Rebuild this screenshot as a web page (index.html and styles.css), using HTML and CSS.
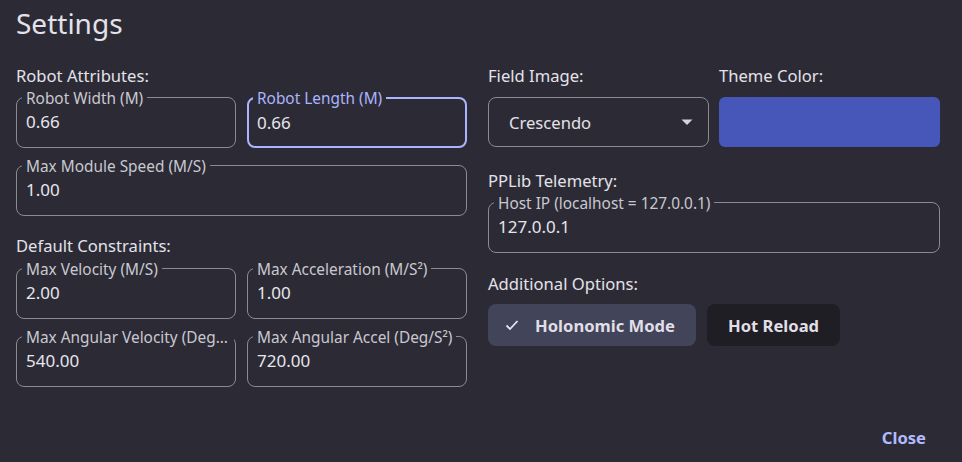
FILE: index.html
```html
<!DOCTYPE html>
<html>
<head>
<meta charset="utf-8">
<link rel="stylesheet" href="styles.css">
</head>
<body>
<div class="dialog">
  <h1 class="title">Settings</h1>
  <div class="columns">
    <div class="col">
      <div class="section-label">Robot Attributes:</div>
      <div class="row2">
        <div class="field"><span class="flabel">Robot Width (M)</span><span class="value">0.66</span></div>
        <div class="field focused"><span class="flabel">Robot Length (M)</span><span class="value">0.66</span></div>
      </div>
      <div class="field mt"><span class="flabel">Max Module Speed (M/S)</span><span class="value">1.00</span></div>
      <div class="section-label sec2">Default Constraints:</div>
      <div class="row2">
        <div class="field"><span class="flabel">Max Velocity (M/S)</span><span class="value">2.00</span></div>
        <div class="field"><span class="flabel">Max Acceleration (M/S²)</span><span class="value">1.00</span></div>
      </div>
      <div class="row2 mt">
        <div class="field"><span class="flabel trunc">Max Angular Velocity (Deg/S)</span><span class="value">540.00</span></div>
        <div class="field"><span class="flabel">Max Angular Accel (Deg/S²)</span><span class="value">720.00</span></div>
      </div>
    </div>
    <div class="col">
      <div class="row2 heads">
        <div class="section-label">Field Image:</div>
        <div class="section-label">Theme Color:</div>
      </div>
      <div class="row2">
        <div class="select"><span>Crescendo</span><svg class="arrow" width="14" height="8" viewBox="0 0 14 8"><path d="M1.5 1.5h11L7 7z" fill="#d4d4da"/></svg></div>
        <div class="swatch"></div>
      </div>
      <div class="section-label sec3">PPLib Telemetry:</div>
      <div class="field"><span class="flabel">Host IP (localhost = 127.0.0.1)</span><span class="value">127.0.0.1</span></div>
      <div class="section-label sec4">Additional Options:</div>
      <div class="chips">
        <div class="chip selected"><svg class="check" width="14" height="12" viewBox="0 0 14 12"><path d="M1.5 6.5l3.5 3.5 7.5-8" fill="none" stroke="#e6e6ee" stroke-width="1.8"/></svg>Holonomic Mode</div>
        <div class="chip">Hot Reload</div>
      </div>
    </div>
  </div>
  <div class="actions"><span class="close">Close</span></div>
</div>
</body>
</html>
```
FILE: styles.css
```css
html, body {
  margin: 0;
  padding: 0;
  background: #2c2b35;
  font-family: "Noto Sans", "Open Sans", sans-serif;
  color: #e3e2ea;
}
.dialog {
  width: 962px;
  height: 462px;
  box-sizing: border-box;
  padding: 0 22px 0 16px;
  display: flex;
  flex-direction: column;
}
.title {
  margin: 0;
  font-size: 28px;
  font-weight: 400;
  line-height: 36px;
  padding-top: 5px;
  height: 54px;
  box-sizing: border-box;
}
.columns {
  display: grid;
  grid-template-columns: 451px 452px;
  column-gap: 21px;
}
.col {
  display: flex;
  flex-direction: column;
}
.section-label {
  font-size: 16.6px;
  line-height: 22px;
  height: 43px;
  padding-top: 11px;
  box-sizing: border-box;
}
.sec2 { height: 52px; padding-top: 19px; }
.sec3 { height: 55px; padding-top: 23px; }
.sec4 { height: 51px; padding-top: 20px; }
.heads .section-label { height: 43px; }
.row2 {
  display: grid;
  grid-template-columns: 1fr 1fr;
  column-gap: 11px;
}
.col:last-child .row2 { column-gap: 10px; }
.mt { margin-top: 17px; }
.field {
  position: relative;
  height: 51px;
  box-sizing: border-box;
  border: 1px solid #8b8a93;
  border-radius: 8px;
  display: flex;
  align-items: center;
  padding: 0 10px 3px 9px;
}
.field.focused {
  border: 2px solid #aab4ff;
  padding-left: 8px;
  padding-bottom: 1px;
}
.flabel {
  position: absolute;
  top: -9px;
  left: 5px;
  padding: 0 4px;
  background: #2c2b35;
  font-size: 15.4px;
  line-height: 20px;
  color: #c9c8d0;
  white-space: nowrap;
}
.focused .flabel { color: #aab4ff; top: -10px; left: 4px; }
.flabel.trunc {
  max-width: 204px;
  overflow: hidden;
  text-overflow: ellipsis;
}
.value {
  font-size: 17px;
  color: #e6e5ec;
}
.select {
  height: 50px;
  box-sizing: border-box;
  border: 1px solid #8b8a93;
  border-radius: 8px;
  display: flex;
  align-items: center;
  justify-content: space-between;
  padding: 0 14px 0 20px;
  font-size: 16.6px;
}
.swatch {
  height: 50px;
  border-radius: 6px;
  background: #4656b9;
}
.chips {
  display: flex;
  gap: 11px;
}
.chip {
  height: 42px;
  border-radius: 8px;
  background: #1f1e24;
  display: flex;
  align-items: center;
  padding: 0 21px;
  font-size: 16.6px;
  font-weight: 700;
  color: #e0dfe6;
}
.chip.selected {
  background: #42445a;
  padding-left: 17px;
}
.check { margin-right: 16px; }
.actions {
  margin-top: auto;
  display: flex;
  justify-content: flex-end;
  padding: 0 14px 12px 0;
}
.close {
  font-size: 16.6px;
  font-weight: 700;
  color: #b2bbff;
  line-height: 24px;
}
```
